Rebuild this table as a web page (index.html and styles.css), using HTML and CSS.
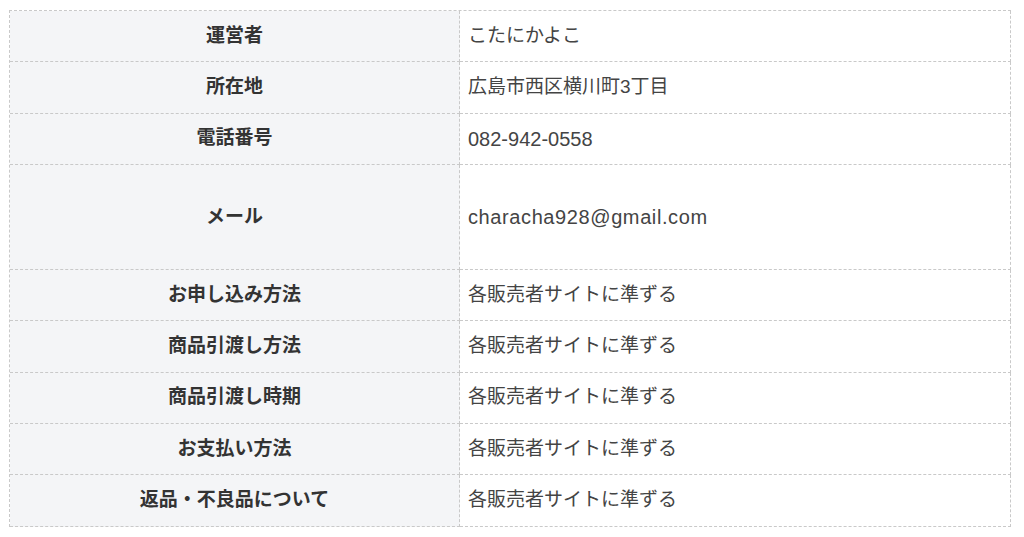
FILE: index.html
```html
<!DOCTYPE html>
<html lang="ja">
<head>
<meta charset="utf-8">
<title>特定商取引法に基づく表記</title>
<link rel="stylesheet" href="styles.css">
</head>
<body>
<div class="info">
  <div class="label">運営者</div><div class="value">こたにかよこ</div>
  <div class="label">所在地</div><div class="value">広島市西区横川町3丁目</div>
  <div class="label">電話番号</div><div class="value"><span class="latin">082-942-0558</span></div>
  <div class="label">メール</div><div class="value"><span class="latin mail">characha928@gmail.com</span></div>
  <div class="label">お申し込み方法</div><div class="value">各販売者サイトに準ずる</div>
  <div class="label">商品引渡し方法</div><div class="value">各販売者サイトに準ずる</div>
  <div class="label">商品引渡し時期</div><div class="value">各販売者サイトに準ずる</div>
  <div class="label">お支払い方法</div><div class="value">各販売者サイトに準ずる</div>
  <div class="label">返品・不良品について</div><div class="value">各販売者サイトに準ずる</div>
</div>
</body>
</html>
```
FILE: styles.css
```css
html, body {
  margin: 0;
  padding: 0;
  background: #ffffff;
}

body {
  padding: 10px 0 0 9px;
  font-family: "Liberation Sans", "Noto Sans CJK JP", sans-serif;
  font-size: 19px;
  color: #3c3c3c;
}

.info {
  width: 1002px;
  box-sizing: border-box;
  display: grid;
  grid-template-columns: 450px 1fr;
  grid-template-rows: 51.33px 51.33px 51.33px 105px 51.33px 51.33px 51.33px 51.33px 51.33px;
  border-top: 1px dashed #c9c9c9;
  border-left: 1px dashed #c9c9c9;
}

.label,
.value {
  display: flex;
  align-items: center;
  box-sizing: border-box;
  border-right: 1px dashed #c9c9c9;
  border-bottom: 1px dashed #c9c9c9;
  line-height: 1.3;
}

.label {
  justify-content: center;
  background: #f4f5f7;
  font-weight: bold;
  color: #333333;
}

.value {
  padding-left: 8px;
  color: #444444;
}

.latin {
  font-size: 20px;
}

.mail {
  letter-spacing: 0.6px;
}
```
